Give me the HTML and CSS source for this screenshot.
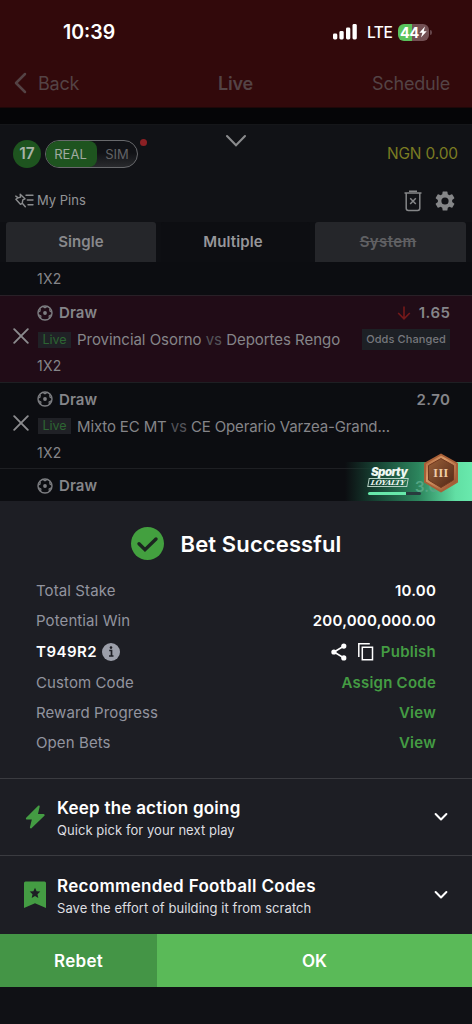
FILE: index.html
```html
<!DOCTYPE html>
<html lang="en">
<head>
<meta charset="utf-8">
<title>Bet Successful</title>
<link rel="stylesheet" href="styles.css">
</head>
<body>
<svg width="0" height="0" class="defs">
  <defs>
    <symbol id="ball" viewBox="0 0 16 16"><circle cx="8" cy="8" r="7" fill="none" stroke="currentColor" stroke-width="1.400"/><circle cx="8" cy="8" r="1.900" fill="currentColor"/><path d="M5.500 1.300 8 2.700l2.500-1.400M1 7.300l2-1.200.300-2.600M15 7.300l-2-1.200-.300-2.600M3.600 13.200l.300-2.200-2.200-1.200M12.400 13.200l-.300-2.200 2.200-1.200" fill="none" stroke="currentColor" stroke-width="1.200"/></symbol>
    <symbol id="close" viewBox="0 0 16 16"><path d="M1.200 1.200l13.600 13.600M14.800 1.200 1.200 14.800" fill="none" stroke="currentColor" stroke-width="1.900" stroke-linecap="round"/></symbol>
    <symbol id="down" viewBox="0 0 14 10"><path d="M1.600 2 7 7.500 12.400 2" fill="none" stroke="currentColor" stroke-width="2" stroke-linecap="round" stroke-linejoin="round"/></symbol>
  </defs>
</svg>
<div class="screen">
  <header class="top">
    <div class="status">
      <span class="time">10:39</span>
      <div class="status-right">
        <svg width="24" height="16" viewBox="0 0 24 16" fill="#fff"><rect x="0" y="9.500" width="4.300" height="6" rx="1.400"/><rect x="6.400" y="7" width="4.300" height="8.500" rx="1.400"/><rect x="13" y="3.600" width="4.300" height="11.900" rx="1.400"/><rect x="19.500" y="0" width="4.300" height="15.500" rx="1.400"/></svg>
        <span class="lte">LTE</span>
        <div class="battery"><span>44</span><svg width="8" height="12" viewBox="0 0 8 12"><path d="M6 .4.4 6.700h3L2 11.600l5.700-6.400h-3z" fill="#fff"/></svg></div><i class="battery-tip"></i>
      </div>
    </div>
    <nav class="nav">
      <div class="back"><svg width="13" height="22" viewBox="0 0 13 22"><path d="M11 2 2 11l9 9" fill="none" stroke="currentColor" stroke-width="2.500" stroke-linecap="round" stroke-linejoin="round"/></svg><span>Back</span></div>
      <span class="nav-title">Live</span>
      <span class="schedule">Schedule</span>
    </nav>
  </header>
  <main class="slip">
    <div class="mode">
      <span class="count">17</span>
      <div class="toggle"><span class="real">REAL</span><span class="sim">SIM</span></div>
      <i class="dot"></i>
      <svg class="collapse" width="22" height="14" viewBox="0 0 22 14"><path d="M2 2l9 9.200L20 2" fill="none" stroke="#8a8b8d" stroke-width="2.100" stroke-linecap="round"/></svg>
      <span class="balance">NGN 0.00</span>
    </div>
    <div class="pins">
      <svg width="19" height="15" viewBox="0 0 19 15" fill="none" stroke="#8a8b8d" stroke-width="1.400" stroke-linecap="round" stroke-linejoin="round"><path d="M5.200 1.200 10 5.800 7.800 6.800l-.6 3.500-1.800 1L.9 6.300l1.600-1.200 3-.9zM7.300 10.200l3 3.600M.8 3.100l2.600 1.700M11 2.300h7M12.300 7h5.700M13 11.800h5"/></svg>
      <span class="pins-label">My Pins</span>
      <svg class="trash" width="18" height="22" viewBox="0 0 18 22" fill="none" stroke="#858688" stroke-width="1.500"><path d="M.5 3h17M5 1.200h8M2.200 3.500v14.800q0 2.200 2.200 2.200h9.200q2.200 0 2.200-2.200V3.500M6.200 8.200l5.600 5.800M11.800 8.200 6.200 14"/></svg>
      <svg width="20" height="20" viewBox="2 2 20 20"><path fill="#858688" d="M19.140 12.940a7 7 0 0 0 0-1.880l2.030-1.580a.5.500 0 0 0 .12-.61l-1.920-3.320a.5.500 0 0 0-.59-.22l-2.390.96a7 7 0 0 0-1.620-.94l-.36-2.540a.5.500 0 0 0-.48-.41h-3.840a.5.500 0 0 0-.47.410l-.360 2.540a7 7 0 0 0-1.620.94l-2.390-.96a.5.500 0 0 0-.59.220L2.740 8.870a.5.500 0 0 0 .12.610l2.030 1.580a7 7 0 0 0 0 1.880l-2.030 1.580a.5.500 0 0 0-.12.610l1.920 3.320c.12.220.370.290.59.220l2.390-.96c.5.380 1.030.7 1.620.94l.36 2.540c.05.240.240.410.48.410h3.840c.240 0 .440-.17.470-.41l.36-2.540a7 7 0 0 0 1.620-.94l2.390.96c.220.080.470 0 .59-.22l1.920-3.320a.5.500 0 0 0-.12-.61zM12 15.600a3.600 3.600 0 1 1 0-7.200 3.600 3.600 0 0 1 0 7.200z"/></svg>
    </div>
    <div class="tabs"><span class="tab">Single</span><span class="tab active">Multiple</span><span class="tab system"><s>System</s></span></div>
    <section class="bets">
      <div class="market first">1X2</div>
      <article class="bet changed">
        <svg class="remove"><use href="#close"/></svg>
        <div class="bet-body">
          <div class="pick"><svg class="ball"><use href="#ball"/></svg><b>Draw</b><svg class="drop" width="14" height="14" viewBox="0 0 14 14"><path d="M7 .5v12M1.200 7 7 12.800 12.800 7" fill="none" stroke="#76191a" stroke-width="1.600"/></svg><b class="price">1.65</b></div>
          <div class="match"><span class="live">Live</span><span class="teams osorno">Provincial Osorno <em>vs</em> Deportes Rengo</span><span class="odds">Odds Changed</span></div>
          <div class="market">1X2</div>
        </div>
      </article>
      <article class="bet">
        <svg class="remove"><use href="#close"/></svg>
        <div class="bet-body">
          <div class="pick"><svg class="ball"><use href="#ball"/></svg><b>Draw</b><b class="price push">2.70</b></div>
          <div class="match"><span class="live">Live</span><span class="teams mixto">Mixto EC MT <em>vs</em> CE Operario Varzea-Grand...</span></div>
          <div class="market">1X2</div>
        </div>
      </article>
      <article class="bet cut">
        <div class="bet-body">
          <div class="pick"><svg class="ball"><use href="#ball"/></svg><b>Draw</b></div>
        </div>
        <div class="loyalty">
          <div class="brand"><span class="sporty">Sporty</span><span class="word">LOYALTY</span><i class="bar"></i></div>
          <span class="under">3.0</span>
          <svg class="medal" width="36" height="40" viewBox="0 0 36 40"><defs><linearGradient id="rim" x1="0" y1="0" x2="1" y2="1"><stop offset="0" stop-color="#a65a32"/><stop offset=".35" stop-color="#d99a68"/><stop offset="1" stop-color="#8d4626"/></linearGradient><linearGradient id="core" x1="0" y1="0" x2="1" y2="1"><stop offset="0" stop-color="#9a6039"/><stop offset="1" stop-color="#522817"/></linearGradient></defs><path d="M18 1.500 34 10.500v18.500L18 38.500 2 29V10.500z" fill="url(#rim)" stroke="#a85f37" stroke-width="2" stroke-linejoin="round"/><path d="M18 5.500 30.500 12.500v14.500L18 34.500 5.500 27V12.500z" fill="url(#core)" stroke="#6f371e"/><text x="18" y="23.500" text-anchor="middle" class="tier">III</text></svg>
        </div>
      </article>
    </section>
  </main>
  <section class="sheet">
    <div class="title"><svg width="33" height="33" viewBox="0 0 33 33"><circle cx="16.500" cy="16.500" r="16.500" fill="#43a03f"/><path d="M8 16.700l6 6L25 12" fill="none" stroke="#1c2520" stroke-width="3.400" stroke-linecap="round"/></svg><h1>Bet Successful</h1></div>
    <div class="details">
      <div class="row"><span>Total Stake</span><b>10.00</b></div>
      <div class="row"><span>Potential Win</span><b>200,000,000.00</b></div>
      <div class="row code"><b class="booking">T949R2</b><svg class="info" width="18" height="18" viewBox="0 0 18 18"><circle cx="9" cy="9" r="9" fill="#9c9faa"/><path d="M7.200 7.500h2.300v5M7 13h4.500" fill="none" stroke="#1d1e24" stroke-width="1.700"/><circle cx="9" cy="4.600" r="1.300" fill="#1d1e24"/></svg>
        <svg class="share" width="16" height="18" viewBox="0 0 16 18"><path d="M13 3 3 9l10 6" fill="none" stroke="#fff" stroke-width="1.600"/><circle cx="12.800" cy="3.100" r="2.600" fill="#fff"/><circle cx="2.900" cy="9" r="2.600" fill="#fff"/><circle cx="12.800" cy="14.900" r="2.600" fill="#fff"/></svg>
        <svg class="copy" width="16" height="18" viewBox="0 0 16 18" fill="none" stroke="#fff" stroke-width="1.500"><path d="M.8 14V.8h11M4.300 4.300h10.200v12.500H4.300z"/></svg>
        <a>Publish</a></div>
      <div class="row"><span>Custom Code</span><a>Assign Code</a></div>
      <div class="row"><span>Reward Progress</span><a>View</a></div>
      <div class="row"><span>Open Bets</span><a>View</a></div>
    </div>
    <div class="panel"><svg class="panel-icon" width="22" height="26" viewBox="0 0 22 26"><path d="M14.800 2.500 2.800 14.500h6.200L6.800 23.500 19.800 11h-7z" fill="#449c43" stroke="#449c43" stroke-width="1.800" stroke-linejoin="round"/></svg><div class="panel-text"><h2>Keep the action going</h2><p>Quick pick for your next play</p></div><svg class="chev"><use href="#down"/></svg></div>
    <div class="panel last"><svg class="panel-icon" width="22" height="28" viewBox="0 0 22 28"><path d="M1.500.5h19q1.500 0 1.500 1.500V27l-11-4.800L0 27V2q0-1.500 1.500-1.500z" fill="#449c43"/><path d="m11 6.700 1.600 3.500 3.700.4-2.800 2.600.8 3.800-3.300-1.900L7.700 17l.8-3.800-2.800-2.600 3.700-.4z" fill="#1d1e24"/></svg><div class="panel-text"><h2 class="wide">Recommended Football Codes</h2><p>Save the effort of building it from scratch</p></div><svg class="chev"><use href="#down"/></svg></div>
    <div class="actions"><button class="rebet">Rebet</button><button class="ok">OK</button></div>
  </section>
</div>
</body>
</html>
```
FILE: styles.css
```css
* { box-sizing: border-box; margin: 0; padding: 0; }
body { background: #101115; font-family: Inter, "Liberation Sans", sans-serif; color: #fff; }
svg { display: block; flex: none; }
span, b, a { white-space: nowrap; }
i, em { font-style: normal; }
.defs { position: absolute; }
.screen { width: 472px; height: 1024px; overflow: hidden; }

.top { height: 108px; background: #32090b; border-bottom: 1px solid #1e0708; }
.status { height: 63px; display: flex; justify-content: space-between; padding: 1px 40px 0 63px; align-items: center; }
.time { font-size: 19.500px; font-weight: 600; letter-spacing: 0; }
.status-right { display: flex; align-items: center; }
.lte { font-size: 15.500px; font-weight: 500; letter-spacing: -.5px; width: 24px; margin: 1px 7px 0 10px; }
.battery { display: flex; align-items: center; justify-content: center; width: 31px; height: 17px; border-radius: 6px; background: linear-gradient(90deg, #59c35c 44%, #735054 44%); font-size: 14.500px; font-weight: 700; line-height: 17px; letter-spacing: -.4px; }
.battery-tip { width: 2px; height: 5px; margin-left: 1px; background: #65454a; border-radius: 0 2px 2px 0; }
.nav { display: grid; grid-template-columns: 1fr 60px 1fr; align-items: center; height: 40px; padding: 0 22px 0 14px; color: #544345; font-size: 18px; }
.back { display: flex; align-items: center; gap: 11px; letter-spacing: -.2px; }
.nav-title { text-align: center; font-weight: 600; padding-left: 7px; letter-spacing: -.2px; }
.schedule { text-align: right; letter-spacing: -.2px; }

.slip { height: 393px; padding-top: 16px; background: #050507; overflow: hidden; }
.mode { position: relative; display: flex; align-items: center; height: 60px; padding: 0 14px 2px 13px; background: #111216; border-top: 1px solid #151619; }
.count { width: 28px; height: 28px; border-radius: 50%; background: #1e541f; color: #a8b3a8; text-align: center; font: 600 15.500px/28px Inter, sans-serif; }
.toggle { display: flex; width: 93px; height: 28px; margin-left: 4px; border: 1px solid #68696c; border-radius: 14px; overflow: hidden; background: linear-gradient(#111216 45%, #292a2d); font-size: 13px; line-height: 26px; text-align: center; }
.real { width: 51px; padding-right: 2px; background: #1e541f; color: #a0aaa0; border-radius: 0 8px 8px 0; }
.sim { flex: 1; color: #626366; }
.dot { align-self: flex-start; width: 7px; height: 7px; margin: 14px 0 0 2px; border-radius: 50%; background: #8c2024; }
.collapse { position: absolute; left: 225px; top: 9px; }
.balance { margin-left: auto; color: #7b7c22; font-size: 15.500px; letter-spacing: -.15px; }
.pins { height: 38px; display: flex; align-items: center; padding: 0 17px 5px 15px; background: #111216; }
.pins-label { margin: -1px 0 0 3px; font-size: 13px; color: #939496; }
.trash { margin: 0 13px 0 auto; }
.tabs { display: grid; grid-template-columns: 150px 149px 151px; gap: 5px; padding: 0 6px; height: 40px; background: #0e0f13; }
.tab { background: #25262a; border-radius: 3px 3px 0 0; color: #89898c; text-align: center; font: 600 15px/40px Inter, sans-serif; letter-spacing: .1px; }
.active { background: #0d0e12; color: #96969a; padding-right: 5px; }
.system { color: #606063; padding-right: 5px; letter-spacing: .4px; }
.bets { background: #0c0d11; color: #858589; }
.market { font-size: 14px; line-height: 20px; letter-spacing: .2px; }
.first { height: 33px; padding: 7px 0 0 37px; }
.bet { position: relative; height: 86.500px; border-top: 1px solid #1e1f23; padding: 6px 22px 0 13px; display: flex; }
.changed { background: #210c17; border-color: #292027; }
.remove { width: 16px; height: 16px; margin: 26px 9px 0 0; color: #8b8b8e; }
.bet-body { flex: 1; min-width: 0; }
.cut .bet-body { padding-left: 25px; }
.pick { display: flex; align-items: center; height: 21px; font-size: 15px; }
.pick b { font-weight: 600; letter-spacing: .1px; }
.pick .price { letter-spacing: .5px; margin-right: -.5px; }
.ball { width: 16px; height: 16px; margin: 0 6px 0 -1px; color: #7d7e82; }
.drop { margin: 0 8px 0 auto; }
.pick .push { margin-left: auto; }
.match { display: flex; align-items: center; height: 34px; margin-top: -.500px; }
.live { width: 33px; height: 16px; margin-right: 6px; background: #202126; color: #2d6532; font-size: 12.500px; line-height: 16px; text-align: center; }
.teams { font-size: 15px; letter-spacing: -.04px; }
.mixto { letter-spacing: -.13px; }
.teams em { color: #535359; }
.odds { margin-left: auto; width: 88px; height: 21px; background: #1d2025; color: #77787d; text-align: center; font-size: 11px; font-weight: 500; letter-spacing: .1px; line-height: 21px; }
.bet-body .market { margin: -.500px 0 0 -1px; }
.loyalty { position: absolute; left: 345px; top: -7px; width: 127px; height: 39px; display: flex; background: linear-gradient(90deg, rgba(12,13,17,0), #174434 25%, #2c855d 58%, #61dfa4 87%, #69e9ad); }
.brand { width: 56px; margin: 5px 0 0 23px; display: flex; flex-direction: column; align-items: flex-start; text-align: center; color: #eef7f2; }
.sporty { margin-left: 3px; font: italic 900 11.500px/11px Inter, sans-serif; letter-spacing: -.6px; }
.word { border: 1px solid #b6d1c5; font: italic 700 7px/7px "DejaVu Serif", serif; width: 40px; height: 9px; transform: skewX(-10deg); letter-spacing: -.2px; }
.bar { width: 53px; height: 3px; margin: 5px 0 0 0; border-radius: 2px; background: linear-gradient(90deg, #67e8aa 71%, #293b3e 71%); }
.under { position: absolute; left: 70px; top: 15px; color: #55a684; font-size: 15px; font-weight: 600; }
.medal { position: absolute; left: 78px; top: -9px; }
.tier { font: 700 12px "Liberation Serif", serif; fill: #f0cda9; letter-spacing: .5px; }

.sheet { background: #1d1e24; height: 486px; }
.title { display: flex; justify-content: center; align-items: center; height: 75px; padding-top: 10px; gap: 17px; }
h1 { font-size: 22px; line-height: 30px; font-weight: 600; letter-spacing: .12px; }
.details { padding: 0 36px; height: 202px; font-size: 15px; }
.row { display: flex; align-items: center; justify-content: space-between; height: 30px; color: #92949f; line-height: 20px; letter-spacing: .1px; }
.code { height: 32px; }
.row b { color: #fff; font-weight: 600; letter-spacing: .22px; }
.row .booking { letter-spacing: .5px; }
.row a { color: #449c43; font-weight: 600; letter-spacing: .24px; }
.info { margin: 0 auto 0 5px; }
.share { margin-right: 11px; }
.copy { margin-right: 7px; }
.panel { height: 77px; border-top: 1px solid #3a3b40; display: flex; align-items: center; padding: 0 24px; }
.last { height: 79px; }
.panel-icon { width: 22px; margin-right: 11px; }
.panel-text { flex: 1; padding-top: 2px; }
h2 { font-size: 17px; line-height: 24px; font-weight: 600; letter-spacing: .23px; }
.wide { letter-spacing: .32px; }
p { font-size: 13px; line-height: 21px; color: #dedee1; letter-spacing: .06px; }
.chev { width: 14px; height: 10px; }
.actions { display: flex; height: 53px; }
button { border: 0; color: #fff; font: 600 17px Inter, sans-serif; letter-spacing: .3px; }
.rebet { width: 157px; background: #449546; }
.ok { flex: 1; background: #5aba58; letter-spacing: 0; }
```
